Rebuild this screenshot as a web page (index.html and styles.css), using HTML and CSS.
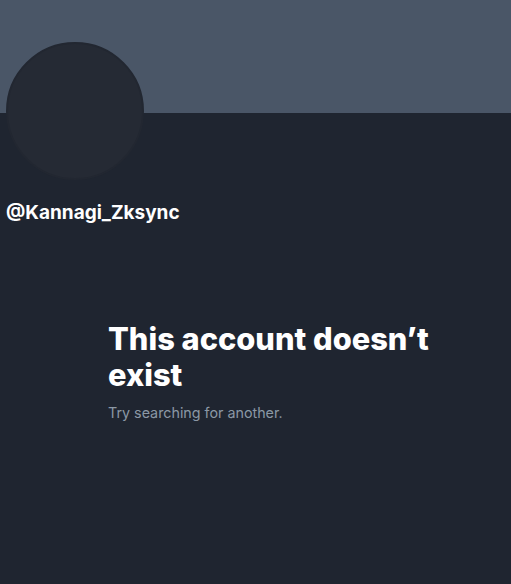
FILE: index.html
```html
<!DOCTYPE html>
<html>
<head>
<meta charset="utf-8">
<link rel="stylesheet" href="styles.css">
</head>
<body>
<div class="banner"></div>
<div class="profile">
  <div class="avatar"></div>
  <div class="handle">@Kannagi_Zksync</div>
</div>
<div class="empty">
  <div class="empty-inner">
    <h1 class="title">This account doesn’t exist</h1>
    <p class="sub">Try searching for another.</p>
  </div>
</div>
</body>
</html>
```
FILE: styles.css
```css
html, body {
  margin: 0;
  padding: 0;
  background: #1f2530;
  height: 100%;
}
body {
  font-family: Inter, "Liberation Sans", sans-serif;
  color: #e7e9ea;
}
.banner {
  height: 113px;
  background: #4a5667;
}
.profile {
  padding-left: 6px;
}
.avatar {
  width: 134px;
  height: 134px;
  border-radius: 50%;
  background: #252a34;
  border: 2px solid #222731;
  margin-top: -71px;
}
.handle {
  margin-top: 21px;
  font-size: 19px;
  line-height: 24px;
  font-weight: 700;
  color: #ffffff;
}
.empty {
  padding: 96px 0 0 108px;
}
.empty-inner {
  max-width: 336px;
}
.title {
  margin: 0;
  font-size: 30.8px;
  line-height: 36px;
  font-weight: 800;
  color: #ffffff;
}
.sub {
  margin: 10px 0 0;
  font-size: 14.3px;
  line-height: 20px;
  color: #8b98a5;
}
```
